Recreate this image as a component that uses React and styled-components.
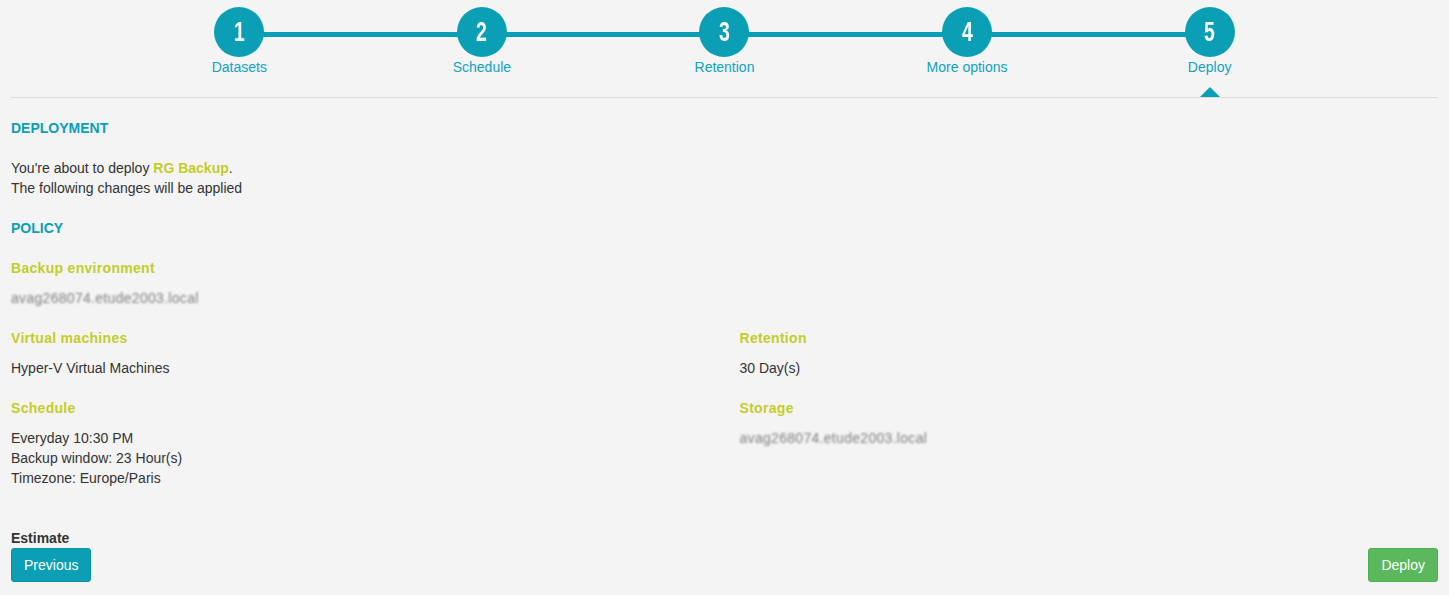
import styled, { createGlobalStyle } from "styled-components";

const teal = "#0a9fb5";
const lime = "#c4cc2b";

const GlobalStyle = createGlobalStyle`
  html, body {
    margin: 0;
    padding: 0;
    background: #f4f4f4;
    font-family: "Liberation Sans", Arial, sans-serif;
    font-size: 14px;
    line-height: 20px;
    color: #333;
  }
`;

const Page = styled.div`
  padding: 0 11px;
  min-height: 595px;
  box-sizing: border-box;
`;

const Header = styled.header`
  border-bottom: 1px solid #dcdcdc;
  height: 97px;
  display: flex;
  justify-content: center;
`;

const Steps = styled.ol`
  list-style: none;
  margin: 0;
  padding: 7px 0 0;
  width: 85%;
  display: grid;
  grid-template-columns: repeat(5, 1fr);
  position: relative;
  &::before {
    content: "";
    position: absolute;
    left: 10%;
    right: 10%;
    top: 32px;
    height: 5px;
    background: ${teal};
  }
`;

const Step = styled.li`
  display: flex;
  flex-direction: column;
  align-items: center;
  position: relative;
  height: 90px;
  &::after {
    content: "";
    display: ${(p) => (p.$active ? "block" : "none")};
    position: absolute;
    bottom: 0;
    left: 50%;
    margin-left: -10px;
    border-left: 10px solid transparent;
    border-right: 10px solid transparent;
    border-bottom: 10px solid ${teal};
  }
`;

const Circle = styled.span`
  position: relative;
  width: 50px;
  height: 50px;
  border-radius: 50%;
  background: ${teal};
  color: #fff;
  display: flex;
  align-items: center;
  justify-content: center;
`;

const Digit = styled.span`
  display: inline-block;
  font-family: "Liberation Sans", Arial, sans-serif;
  font-weight: bold;
  font-size: 27px;
  line-height: 1;
  transform: scaleX(0.72);
`;

const StepLabel = styled.span`
  color: #12a2bd;
  font-size: 14px;
  line-height: 20px;
`;

const SectionTitle = styled.h3`
  margin: 20px 0 0;
  font-size: 14px;
  line-height: 20px;
  font-weight: bold;
  color: ${teal};
`;

const Text = styled.p`
  margin: 20px 0 0;
`;

const Hl = styled.strong`
  color: ${lime};
`;

const Row = styled.div`
  display: grid;
  grid-template-columns: 1fr 1fr;
  margin: 0 -15px;
`;

const Col = styled.div`
  padding: 0 15px;
`;

const Field = styled.div`
  margin-top: 20px;
`;

const Label = styled.div`
  font-weight: bold;
  color: ${lime};
  letter-spacing: 0.3px;
`;

const Value = styled.div`
  margin-top: 10px;
`;

const Blurred = styled.span`
  color: #808080;
  letter-spacing: 0.3px;
  filter: blur(1.2px);
`;

const Estimate = styled.div`
  margin-top: 40px;
  font-weight: bold;
`;

const Actions = styled.div`
  display: flex;
  justify-content: space-between;
`;

const Button = styled.button`
  font-family: "Liberation Sans", Arial, sans-serif;
  font-size: 14px;
  line-height: 20px;
  padding: 6px 12px;
  border-radius: 3px;
  color: #fff;
  cursor: pointer;
  background: ${(p) => (p.$variant === "success" ? "#5cb85c" : teal)};
  border: 1px solid ${(p) => (p.$variant === "success" ? "#4cae4c" : "#0893a8")};
`;

const steps = ["Datasets", "Schedule", "Retention", "More options", "Deploy"];

export default function App() {
  return (
    <>
      <GlobalStyle />
      <Page>
        <Header>
          <Steps>
            {steps.map((s, i) => (
              <Step key={s} $active={i === steps.length - 1}>
                <Circle><Digit>{i + 1}</Digit></Circle>
                <StepLabel>{s}</StepLabel>
              </Step>
            ))}
          </Steps>
        </Header>

        <SectionTitle>DEPLOYMENT</SectionTitle>
        <Text>
          You're about to deploy <Hl>RG Backup</Hl>.<br />
          The following changes will be applied
        </Text>

        <SectionTitle>POLICY</SectionTitle>
        <Field>
          <Label>Backup environment</Label>
          <Value><Blurred>avag268074.etude2003.local</Blurred></Value>
        </Field>

        <Row>
          <Col>
            <Field>
              <Label>Virtual machines</Label>
              <Value>Hyper-V Virtual Machines</Value>
            </Field>
            <Field>
              <Label>Schedule</Label>
              <Value>
                Everyday 10:30 PM<br />
                Backup window: 23 Hour(s)<br />
                Timezone: Europe/Paris
              </Value>
            </Field>
          </Col>
          <Col>
            <Field>
              <Label>Retention</Label>
              <Value>30 Day(s)</Value>
            </Field>
            <Field>
              <Label>Storage</Label>
              <Value><Blurred>avag268074.etude2003.local</Blurred></Value>
            </Field>
          </Col>
        </Row>

        <Estimate>Estimate</Estimate>
        <Actions>
          <Button>Previous</Button>
          <Button $variant="success">Deploy</Button>
        </Actions>
      </Page>
    </>
  );
}
